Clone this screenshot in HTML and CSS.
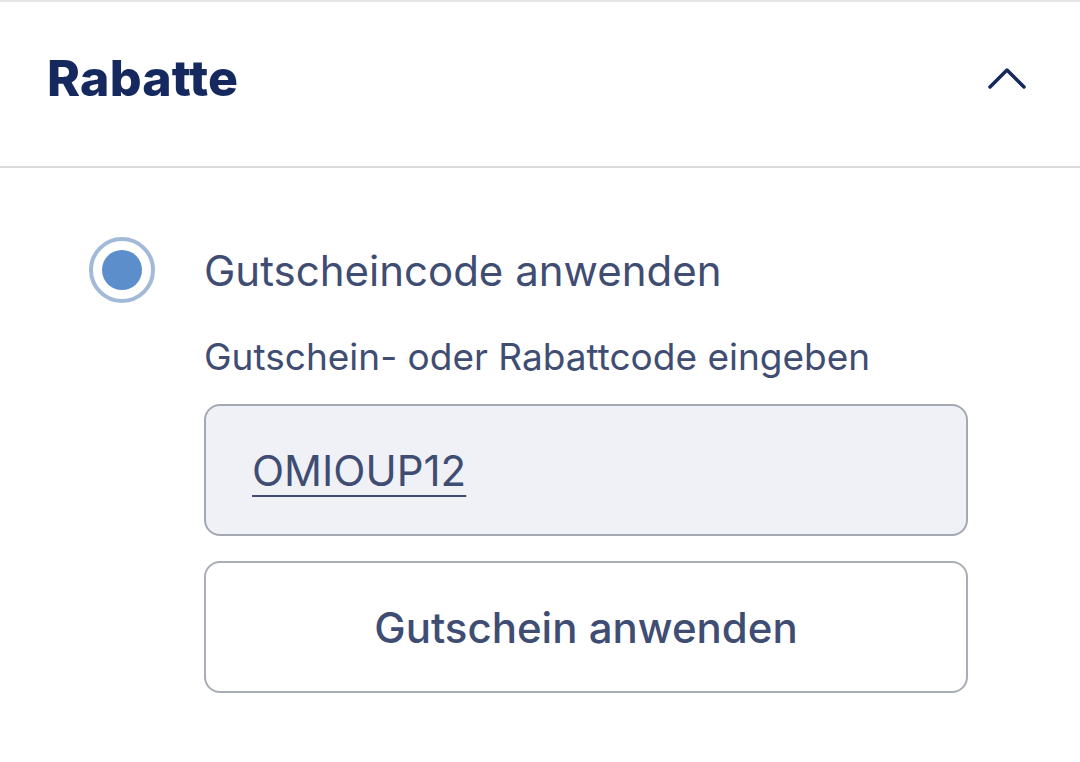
FILE: index.html
```html
<!DOCTYPE html>
<html lang="de">
<head>
<meta charset="utf-8">
<link rel="stylesheet" href="styles.css">
</head>
<body>
<div class="panel">
  <div class="header">
    <h2 class="title">Rabatte</h2>
    <svg class="chevron" width="40" height="24" viewBox="0 0 40 24"><path d="M3 21 L20 4 L37 21" fill="none" stroke="#15295e" stroke-width="3.5" stroke-linecap="round" stroke-linejoin="round"/></svg>
  </div>
  <div class="body">
    <div class="option">
      <span class="radio"><span class="dot"></span></span>
      <span class="option-label">Gutscheincode anwenden</span>
    </div>
    <div class="form">
      <label class="field-label">Gutschein- oder Rabattcode eingeben</label>
      <div class="input"><span class="code">OMIOUP12</span></div>
      <button class="btn">Gutschein anwenden</button>
    </div>
  </div>
</div>
</body>
</html>
```
FILE: styles.css
```css
html, body { margin: 0; padding: 0; background: #fff; }
body { font-family: "Inter", "Noto Sans", sans-serif; width: 1080px; height: 762px; overflow: hidden; }
.panel { border-top: 2px solid #e6e6e8; }
.header { display: flex; align-items: flex-start; justify-content: space-between; height: 166px; padding: 46px 53px 0 47px; border-bottom: 2px solid #dcdcde; box-sizing: border-box; }
.title { margin: 0; font-size: 50px; line-height: 60px; font-weight: 800; color: #15295e; letter-spacing: 0.2px; }
.chevron { display: block; margin-top: 18px; }
.body { padding: 69px 0 0 89px; }
.option { display: flex; align-items: center; gap: 49px; }
.radio { width: 66px; height: 66px; border-radius: 50%; border: 4px solid #a2bad8; box-sizing: border-box; display: flex; align-items: center; justify-content: center; }
.dot { width: 40px; height: 40px; border-radius: 50%; background: #5b8ecb; }
.option-label { font-size: 42px; color: #3f4d73; }
.form { margin-left: 115px; width: 764px; display: flex; flex-direction: column; }
.field-label { font-size: 37px; line-height: 45px; color: #3f4d73; margin-top: 31px; }
.input { margin-top: 25px; height: 132px; box-sizing: border-box; border: 2px solid #a3a8b2; border-radius: 16px; background: #eff1f6; display: flex; align-items: center; padding-left: 46px; }
.code { font-size: 42px; color: #3f4d73; text-decoration: underline; text-decoration-thickness: 2px; text-underline-offset: 9px; }
.btn { margin-top: 25px; height: 132px; box-sizing: border-box; border: 2px solid #a9adb5; border-radius: 16px; background: #fff; font-family: inherit; font-size: 42px; font-weight: 500; color: #3f4d73; }
```
